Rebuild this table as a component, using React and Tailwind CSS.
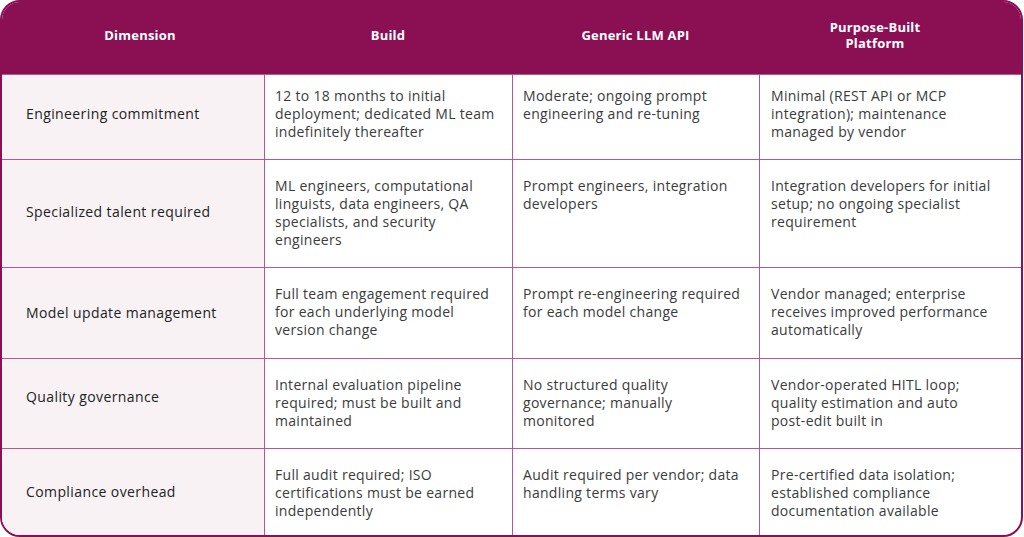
const heads = ["Dimension", "Build", "Generic LLM API", "Purpose-Built Platform"];
const headPad = ["pl-[14px]", "", "", "pr-[30px]"];

const rows = [
  {
    h: "h-[85px]",
    pt: "pt-[12px]",
    dim: "pb-[7px]",
    cells: [
      "Engineering commitment",
      "12 to 18 months to initial deployment; dedicated ML team indefinitely thereafter",
      "Moderate; ongoing prompt engineering and re-tuning",
      "Minimal (REST API or MCP integration); maintenance managed by vendor",
    ],
  },
  {
    h: "h-[108px]",
    pt: "pt-[17px]",
    dim: "pb-[3px]",
    cells: [
      "Specialized talent required",
      "ML engineers, computational linguists, data engineers, QA specialists, and security engineers",
      "Prompt engineers, integration developers",
      "Integration developers for initial setup; no ongoing specialist requirement",
    ],
  },
  {
    h: "h-[91px]",
    pt: "pt-[17px]",
    dim: "pb-[1px]",
    cells: [
      "Model update management",
      "Full team engagement required for each underlying model version change",
      "Prompt re-engineering required for each model change",
      "Vendor managed; enterprise receives improved performance automatically",
    ],
  },
  {
    h: "h-[90px]",
    pt: "pt-[17px]",
    dim: "pb-[13px]",
    cells: [
      "Quality governance",
      "Internal evaluation pipeline required; must be built and maintained",
      "No structured quality governance; manually monitored",
      <>
        Vendor-operated HITL loop; quality estimation and auto{" "}
        <span className="whitespace-nowrap">post-edit</span> built in
      </>,
    ],
  },
  {
    h: "h-[87px]",
    pt: "pt-[17px]",
    dim: "",
    cells: [
      "Compliance overhead",
      "Full audit required; ISO certifications must be earned independently",
      "Audit required per vendor; data handling terms vary",
      "Pre-certified data isolation; established compliance documentation available",
    ],
  },
];

const padX = ["", "pl-[10px] pr-[12px]", "pl-[10px] pr-[12px]", "pl-[11px] pr-[16px]"];

export default function App() {
  return (
    <div className="w-[1024px] h-[537px] bg-white" style={{ fontFamily: "'Open Sans', 'Liberation Sans', sans-serif" }}>
      <div className="w-[1023px] h-[537px] border-2 border-[#8b0f53] rounded-[20px] overflow-hidden grid grid-cols-[262px_248px_247px_262px]">
        {heads.map((t, i) => (
          <div
            key={t}
            className={`h-[72px] bg-[#8b0f53] flex items-center justify-center pb-[7px] ${headPad[i]} text-center text-white text-[13px] font-bold leading-[16px] tracking-[0.2px]`}
          >
            <span className={i === 3 ? "w-[110px]" : ""}>{t}</span>
          </div>
        ))}
        {rows.map((r, ri) =>
          r.cells.map((c, i) =>
            i === 0 ? (
              <div
                key={ri + "-" + i}
                className={`${r.h} ${r.dim} border-t border-[#b25a8b] bg-[#f8f2f5] flex items-center pl-[24px] text-[14px] font-medium text-[#222] leading-[18px] tracking-[0.4px]`}
              >
                {c}
              </div>
            ) : (
              <div
                key={ri + "-" + i}
                className={`${r.h} ${r.pt} ${padX[i]} border-t border-l border-[#b25a8b] text-[14px] text-[#3b3b3b] leading-[18px] tracking-[0.3px]`}
              >
                {c}
              </div>
            )
          )
        )}
      </div>
    </div>
  );
}
